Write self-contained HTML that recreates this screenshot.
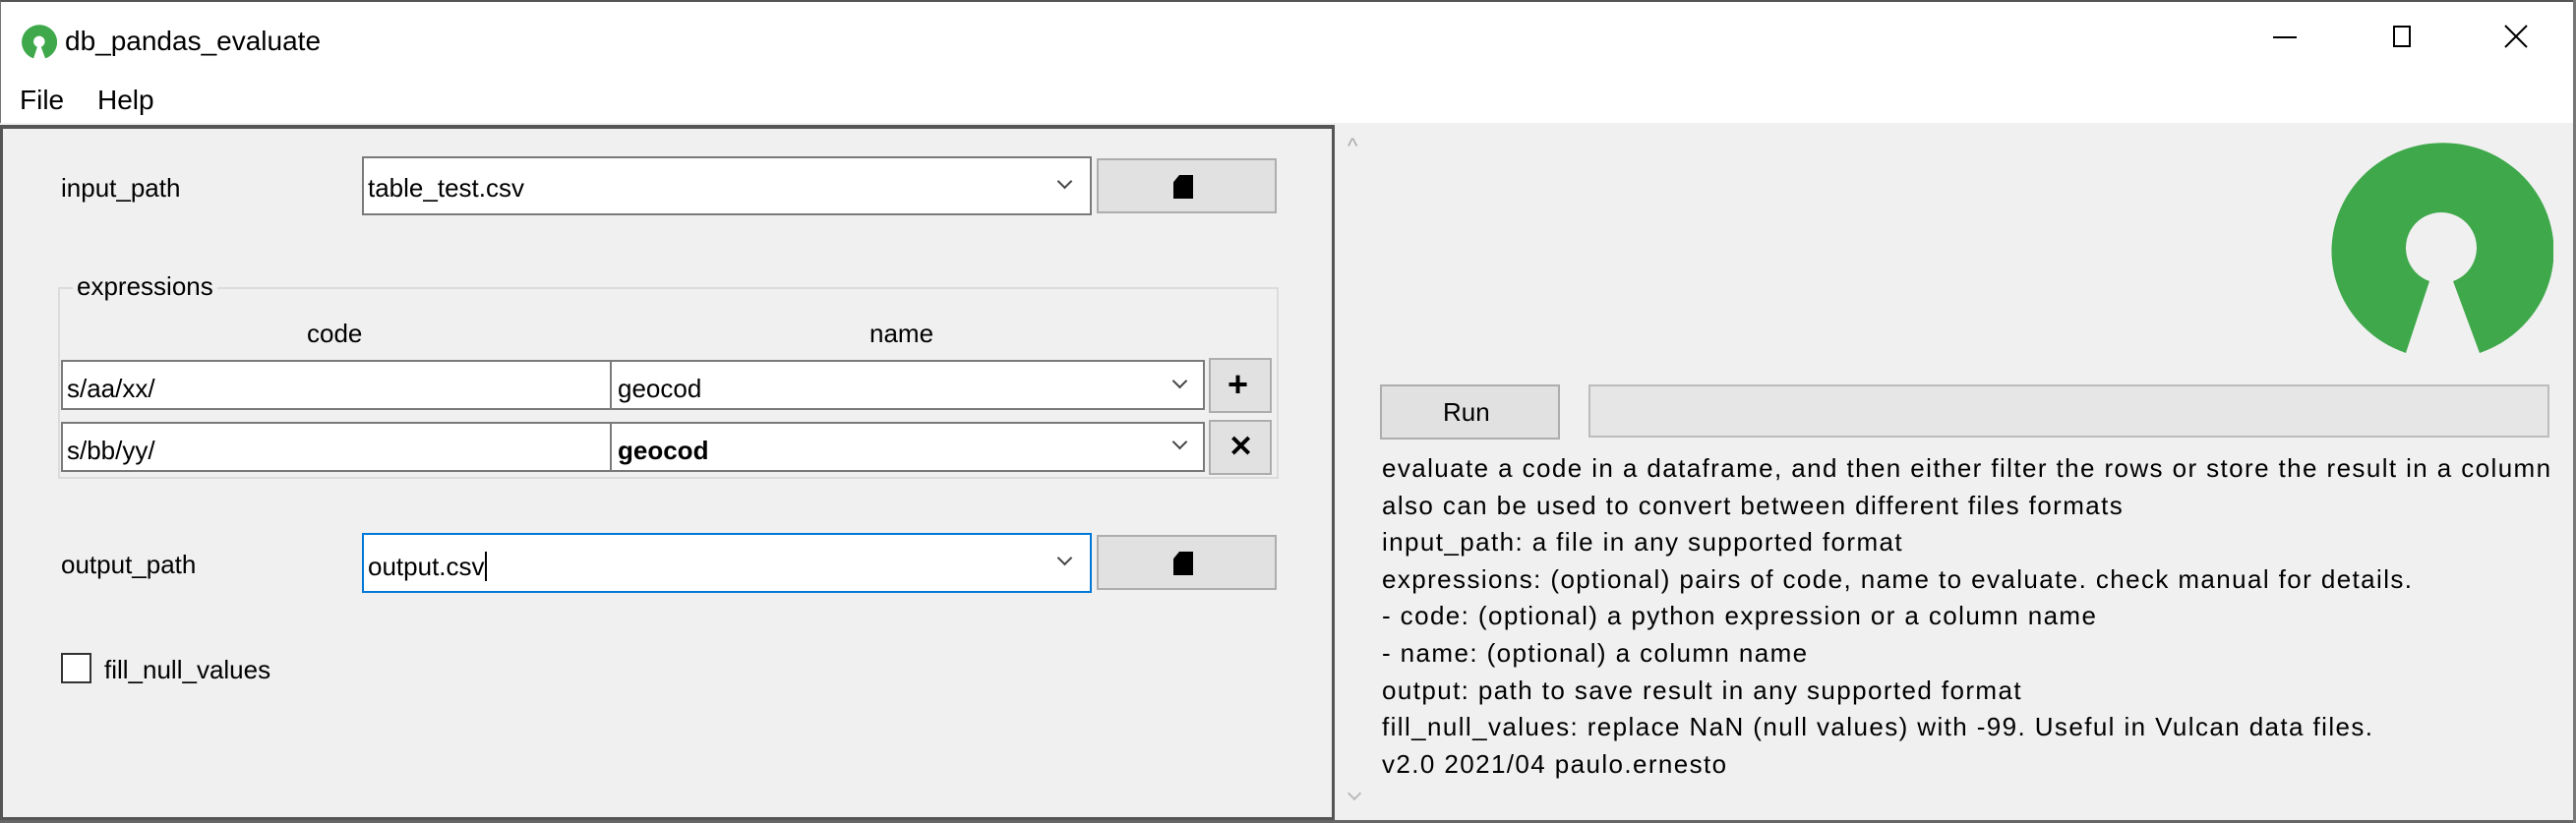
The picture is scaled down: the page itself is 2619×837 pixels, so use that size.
<!DOCTYPE html>
<html><head><meta charset="utf-8"><style>
*{margin:0;padding:0;box-sizing:border-box}
body{width:2619px;height:837px;overflow:hidden;background:#f0f0f0;font-family:"Liberation Sans",sans-serif;font-size:26px;color:#000;position:relative}
.a{position:absolute}
.top{left:0;top:0;width:2619px;height:125px;background:#fff;border-top:2px solid #555;border-left:1px solid #777;border-right:2px solid #777}
.fld{background:#fff;border:2px solid #7a7a7a}
.btn{background:#e1e1e1;border:2px solid #adadad}
.t{white-space:nowrap;line-height:1}
.chev{position:absolute;width:14px;height:14px;border-right:2px solid #444;border-bottom:2px solid #444;transform:rotate(45deg)}
</style></head><body>
<div class="a top"></div>
<svg class="a" style="left:22px;top:22px" width="36" height="40" viewBox="0 0 226 220"><path d="M76 219 L100 146 A36 36 0 1 1 124 146 L151 219 A113 110 0 1 0 76 219Z" fill="#3ea84a"/></svg>
<div class="a t" style="left:66px;top:28px;font-size:28px">db_pandas_evaluate</div>
<div class="a" style="left:2311px;top:37px;width:24px;height:2px;background:#000"></div>
<div class="a" style="left:2433px;top:26px;width:18px;height:22px;border:2px solid #000"></div>
<svg class="a" style="left:2546px;top:25px" width="24" height="24" viewBox="0 0 24 24"><path d="M1 1L23 23M23 1L1 23" stroke="#000" stroke-width="2"/></svg>
<div class="a t" style="left:20px;top:88px;font-size:28px">File</div>
<div class="a t" style="left:99px;top:88px;font-size:28px">Help</div>

<div class="a" style="left:0;top:127px;width:1357px;height:707px;border:3px solid #555;border-top:4px solid #555"></div>

<div class="a t" style="left:62px;top:178px">input_path</div>
<div class="a fld" style="left:368px;top:159px;width:742px;height:60px"></div>
<div class="a t" style="left:374px;top:178px">table_test.csv</div>
<div class="chev" style="left:1077px;top:179px;width:11px;height:11px"></div>
<div class="a btn" style="left:1115px;top:161px;width:183px;height:56px"></div>
<div class="a" style="left:1193px;top:178px;width:20px;height:24px;background:#000;clip-path:polygon(30% 0,100% 0,100% 100%,0 100%,0 30%)"></div>

<div class="a" style="left:59px;top:292px;width:1241px;height:195px;border:2px solid #dcdcdc"></div>
<div class="a t" style="left:74px;top:278px;background:#f0f0f0;padding:0 4px">expressions</div>
<div class="a t" style="left:312px;top:326px">code</div>
<div class="a t" style="left:884px;top:326px">name</div>

<div class="a fld" style="left:62px;top:366px;width:560px;height:51px"></div>
<div class="a fld" style="left:620px;top:366px;width:605px;height:51px"></div>
<div class="a t" style="left:68px;top:382px">s/aa/xx/</div>
<div class="a t" style="left:628px;top:382px">geocod</div>
<div class="chev" style="left:1194px;top:382px;width:11px;height:11px"></div>
<div class="a btn" style="left:1229px;top:364px;width:64px;height:56px"></div>
<div class="a t" style="left:1248px;top:373px;font-size:36px;font-weight:bold">+</div>

<div class="a fld" style="left:62px;top:429px;width:560px;height:51px"></div>
<div class="a fld" style="left:620px;top:429px;width:605px;height:51px"></div>
<div class="a t" style="left:68px;top:445px">s/bb/yy/</div>
<div class="a t" style="left:628px;top:445px;font-weight:bold">geocod</div>
<div class="chev" style="left:1194px;top:444px;width:11px;height:11px"></div>
<div class="a btn" style="left:1229px;top:427px;width:64px;height:56px"></div>
<div class="a t" style="left:1249px;top:440px;font-size:30px;font-weight:bold">✕</div>

<div class="a t" style="left:62px;top:561px">output_path</div>
<div class="a" style="left:368px;top:542px;width:742px;height:61px;background:#fff;border:2px solid #0078d7"></div>
<div class="a t" style="left:374px;top:561px">output.csv<span style="display:inline-block;width:2px;height:30px;background:#000;vertical-align:-6px"></span></div>
<div class="chev" style="left:1077px;top:562px;width:11px;height:11px"></div>
<div class="a btn" style="left:1115px;top:544px;width:183px;height:56px"></div>
<div class="a" style="left:1193px;top:561px;width:20px;height:24px;background:#000;clip-path:polygon(30% 0,100% 0,100% 100%,0 100%,0 30%)"></div>

<div class="a" style="left:62px;top:664px;width:31px;height:31px;background:#fff;border:2px solid #333"></div>
<div class="a t" style="left:106px;top:668px">fill_null_values</div>

<div class="a t" style="left:1370px;top:138px;color:#aaa;font-size:22px">^</div>
<div class="a" style="left:1372px;top:802px;width:10px;height:10px;border-right:2px solid #bbb;border-bottom:2px solid #bbb;transform:rotate(45deg)"></div>

<svg class="a" style="left:2370px;top:140px" width="226" height="220" viewBox="0 0 226 220"><path d="M76 219 L100 146 A36 36 0 1 1 124 146 L151 219 A113 110 0 1 0 76 219Z" fill="#3ea84a"/></svg>

<div class="a btn" style="left:1403px;top:391px;width:183px;height:56px"></div>
<div class="a t" style="left:1467px;top:406px">Run</div>
<div class="a" style="left:1615px;top:391px;width:977px;height:54px;background:#e6e6e6;border:2px solid #bcbcbc"></div>

<div class="a" style="left:1405px;top:458px;line-height:37.6px;font-size:26px;letter-spacing:1.4px;white-space:nowrap">
evaluate a code in a dataframe, and then either filter the rows or store the result in a column<br>
also can be used to convert between different files formats<br>
input_path: a file in any supported format<br>
expressions: (optional) pairs of code, name to evaluate. check manual for details.<br>
- code: (optional) a python expression or a column name<br>
- name: (optional) a column name<br>
output: path to save result in any supported format<br>
fill_null_values: replace NaN (null values) with -99. Useful in Vulcan data files.<br>
v2.0 2021/04 paulo.ernesto</div>
<div class="a" style="left:0;top:834px;width:2619px;height:3px;background:#666"></div>
<div class="a" style="left:2616px;top:0;width:3px;height:837px;background:#777"></div>
</body></html>
